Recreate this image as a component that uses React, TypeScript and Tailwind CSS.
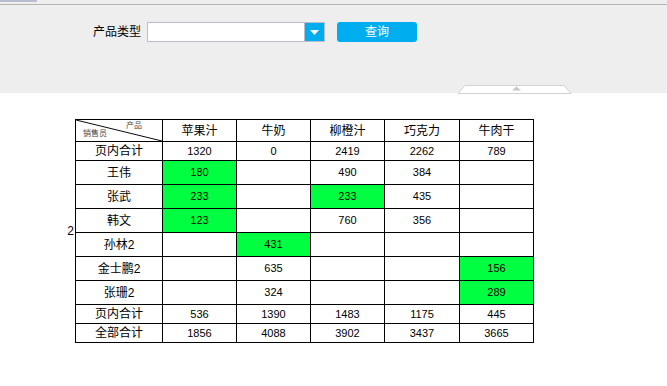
import React from 'react';

type Cell = { v: string; g?: boolean };

const font = "font-['Liberation_Sans','Noto_Sans_CJK_SC',sans-serif]";

const products = ['苹果汁', '牛奶', '柳橙汁', '巧克力', '牛肉干'];

const rows: { name: string; h: string; cells: Cell[] }[] = [
  { name: '页内合计', h: 'h-[19px]', cells: [{ v: '1320' }, { v: '0' }, { v: '2419' }, { v: '2262' }, { v: '789' }] },
  { name: '王伟', h: 'h-[24px]', cells: [{ v: '180', g: true }, { v: '' }, { v: '490' }, { v: '384' }, { v: '' }] },
  { name: '张武', h: 'h-[24px]', cells: [{ v: '233', g: true }, { v: '' }, { v: '233', g: true }, { v: '435' }, { v: '' }] },
  { name: '韩文', h: 'h-[24px]', cells: [{ v: '123', g: true }, { v: '' }, { v: '760' }, { v: '356' }, { v: '' }] },
  { name: '孙林2', h: 'h-[24px]', cells: [{ v: '' }, { v: '431', g: true }, { v: '' }, { v: '' }, { v: '' }] },
  { name: '金士鹏2', h: 'h-[24px]', cells: [{ v: '' }, { v: '635' }, { v: '' }, { v: '' }, { v: '156', g: true }] },
  { name: '张珊2', h: 'h-[24px]', cells: [{ v: '' }, { v: '324' }, { v: '' }, { v: '' }, { v: '289', g: true }] },
  { name: '页内合计', h: 'h-[19px]', cells: [{ v: '536' }, { v: '1390' }, { v: '1483' }, { v: '1175' }, { v: '445' }] },
  { name: '全部合计', h: 'h-[19px]', cells: [{ v: '1856' }, { v: '4088' }, { v: '3902' }, { v: '3437' }, { v: '3665' }] },
];

export default function App() {
  return (
    <div className={`min-h-screen w-[667px] bg-white text-black ${font}`}>
      {/* query panel */}
      <div className="relative h-[93px] bg-[#eeeeee]">
        <div className="h-[2px] w-[37px] bg-[#b9bdd0]" />
        <div className="mt-[2px] h-px bg-[#b5b5b5]" />
        <div className="flex items-center pl-[93px] pt-[17px]">
          <span className="text-[12px] leading-[20px]">产品类型</span>
          <div className="ml-[6px] flex h-[20px]">
            <div className="h-[20px] w-[158px] border border-[#b9bccb] bg-white" />
            <div className="flex h-[20px] w-[20px] items-center justify-center border border-l-0 border-[#b9bccb] bg-[#00adef]">
              <svg width="9" height="5" viewBox="0 0 9 5">
                <polygon points="0,0 9,0 4.5,5" fill="#ffffff" />
              </svg>
            </div>
          </div>
          <button className="ml-[12px] h-[20px] w-[80px] rounded-[3px] bg-[#00aeef] text-[12px] leading-[20px] text-white">
            查询
          </button>
        </div>
        <svg className="absolute left-[458px] top-[85px]" width="114" height="9" viewBox="0 0 114 9">
          <polygon points="0,8.5 7,0.5 106,0.5 113,8.5" fill="#ffffff" stroke="#d2d2d2" />
          <polygon points="54,5.5 58.5,1.5 63,5.5" fill="#c6c6c6" />
        </svg>
      </div>

      {/* report */}
      <div className="flex items-center pl-[62px] pt-[26px]">
        <span className="w-[13px] pr-px text-right text-[12px]">2</span>
        <table className="w-[458px] table-fixed border-collapse">
          <colgroup>
            <col className="w-[87px]" />
            <col className="w-[74px]" />
            <col className="w-[74px]" />
            <col className="w-[74px]" />
            <col className="w-[75px]" />
            <col className="w-[74px]" />
          </colgroup>
          <thead>
            <tr className="h-[22px]">
              <th className="relative border border-black p-0 font-normal">
                <svg className="absolute inset-0 h-full w-full" preserveAspectRatio="none" viewBox="0 0 87 22">
                  <line x1="0" y1="0" x2="87" y2="22" stroke="#000" strokeWidth="1" />
                </svg>
                <span className="absolute right-[20px] top-[2px] text-[8px] leading-none text-[#444]">产品</span>
                <span className="absolute bottom-[3px] left-[7px] text-[8px] leading-none text-[#444]">销售员</span>
              </th>
              {products.map((p) => (
                <th key={p} className="border border-black p-0 text-[12px] font-normal">
                  {p}
                </th>
              ))}
            </tr>
          </thead>
          <tbody>
            {rows.map((r, i) => (
              <tr key={i} className={r.h}>
                <td className="border border-black p-0 text-center text-[12px]">{r.name}</td>
                {r.cells.map((c, j) => (
                  <td
                    key={j}
                    className={`border border-black p-0 text-center text-[11px] ${c.g ? 'bg-[#00ff40]' : ''}`}
                  >
                    {c.v}
                  </td>
                ))}
              </tr>
            ))}
          </tbody>
        </table>
      </div>
    </div>
  );
}
